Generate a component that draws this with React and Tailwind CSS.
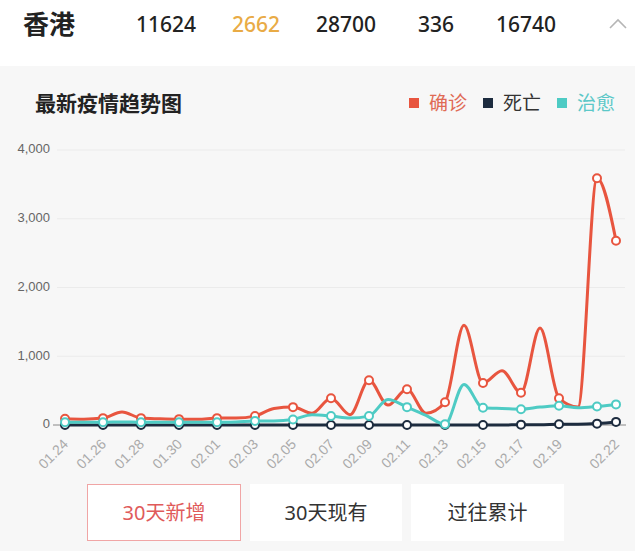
import React from "react";

const stats = [
  { value: "11624", color: "text-[#222]" },
  { value: "2662", color: "text-[#e9ab45]" },
  { value: "28700", color: "text-[#222]" },
  { value: "336", color: "text-[#222]" },
  { value: "16740", color: "text-[#222]" },
];

const dates = [
  "01.24", "01.25", "01.26", "01.27", "01.28", "01.29", "01.30", "01.31",
  "02.01", "02.02", "02.03", "02.04", "02.05", "02.06", "02.07", "02.08",
  "02.09", "02.10", "02.11", "02.12", "02.13", "02.14", "02.15", "02.16",
  "02.17", "02.18", "02.19", "02.20", "02.21", "02.22",
];

const confirmed = [
  90, 85, 100, 190, 100, 90, 85, 85, 100, 100, 130, 240, 260, 170, 390, 150,
  650, 290, 520, 170, 330, 1450, 610, 790, 470, 1410, 390, 260, 3590, 2680,
];
const dead = [
  0, 0, 0, 0, 0, 0, 0, 0, 0, 0, 0, 0, 0, 0, 0, 0,
  0, 0, 0, 0, 0, 0, 0, 0, 5, 5, 10, 10, 20, 45,
];
const cured = [
  40, 40, 40, 45, 40, 40, 40, 40, 40, 45, 60, 60, 80, 150, 130, 100,
  130, 370, 260, 140, 10, 590, 250, 240, 230, 260, 280, 250, 270, 300,
];

const series = [
  { data: confirmed, color: "#e8553f" },
  { data: dead, color: "#1d2c3f" },
  { data: cured, color: "#4ecbc4" },
];

// chart geometry
const X0 = 65;
const STEP = 19;
const Y0 = 295;
const K = 275 / 4000;

const px = (i) => X0 + i * STEP;
const py = (v) => Y0 - v * K;

// monotone cubic, like a smoothed echarts line
function smoothPath(vals) {
  const pts = vals.map((v, i) => [px(i), py(v)]);
  const n = pts.length;
  const h = STEP;
  const s = [];
  for (let i = 0; i < n - 1; i++) s[i] = (pts[i + 1][1] - pts[i][1]) / h;
  const m = new Array(n).fill(0);
  for (let i = 1; i < n - 1; i++) {
    if (s[i - 1] * s[i] <= 0) {
      m[i] = 0;
    } else {
      const p = (s[i - 1] + s[i]) / 2;
      m[i] =
        (Math.sign(s[i - 1]) + Math.sign(s[i])) *
        Math.min(Math.abs(s[i - 1]), Math.abs(s[i]), 0.5 * Math.abs(p));
    }
  }
  m[0] = (3 * s[0] - m[1]) / 2;
  m[n - 1] = (3 * s[n - 2] - m[n - 2]) / 2;
  let d = `M${pts[0][0]},${pts[0][1].toFixed(1)}`;
  for (let i = 0; i < n - 1; i++) {
    const [x0, y0] = pts[i];
    const [x1, y1] = pts[i + 1];
    d += ` C${(x0 + h / 3).toFixed(1)},${(y0 + (m[i] * h) / 3).toFixed(1)} ${(x1 - h / 3).toFixed(1)},${(y1 - (m[i + 1] * h) / 3).toFixed(1)} ${x1},${y1.toFixed(1)}`;
  }
  return d;
}

const markerIdx = [0, 2, 4, 6, 8, 10, 12, 14, 16, 18, 20, 22, 24, 26, 28, 29];
const labelIdx = [0, 2, 4, 6, 8, 10, 12, 14, 16, 18, 20, 22, 24, 26, 29];
const yTicks = [
  { v: 4000, label: "4,000" },
  { v: 3000, label: "3,000" },
  { v: 2000, label: "2,000" },
  { v: 1000, label: "1,000" },
  { v: 0, label: "0" },
];

const TrendChart = () => (
  <svg width="635" height="345" viewBox="0 0 635 345" className="block">
    {yTicks.map((t) => (
      <g key={t.v}>
        {t.v > 0 && (
          <line x1="57" x2="625" y1={py(t.v)} y2={py(t.v)} stroke="#ebebeb" strokeWidth="1" />
        )}
        <text
          x="50"
          y={py(t.v)}
          textAnchor="end"
          dominantBaseline="middle"
          fontSize="13"
          fill="#666"
          fontFamily="'Liberation Sans', Arial, sans-serif"
        >
          {t.label}
        </text>
      </g>
    ))}
    <line x1="53" x2="626" y1={Y0} y2={Y0} stroke="#888" strokeWidth="1" />

    {series.map((s, si) => (
      <g key={si}>
        <path d={smoothPath(s.data)} fill="none" stroke={s.color} strokeWidth="3" strokeLinejoin="round" />
        {markerIdx.map((i) => (
          <circle key={i} cx={px(i)} cy={py(s.data[i])} r="4" fill="#fff" stroke={s.color} strokeWidth="2" />
        ))}
      </g>
    ))}

    {labelIdx.map((i) => (
      <text
        key={i}
        x={px(i) + 4}
        y="315"
        textAnchor="end"
        fontSize="14"
        fill="#aaa"
        fontFamily="'Liberation Sans', Arial, sans-serif"
        transform={`rotate(-45 ${px(i) + 4} 315)`}
      >
        {dates[i]}
      </text>
    ))}
  </svg>
);

const legend = [
  { name: "确诊", box: "bg-[#e8553f]", text: "text-[#e06a55]" },
  { name: "死亡", box: "bg-[#1d2c3f]", text: "text-[#333]" },
  { name: "治愈", box: "bg-[#4ecbc4]", text: "text-[#5cc8c8]" },
];

const App = () => {
  return (
    <div className="w-[635px] h-[551px] overflow-hidden bg-[#f7f7f7] font-['Noto_Sans','Noto_Sans_CJK_SC',sans-serif]">
      <div className="h-[66px] bg-white">
        <div className="h-[48px] flex items-center pl-[23px] pr-[7px]">
          <span className="w-[98px] text-[26px] leading-none font-bold text-[#222]">香港</span>
          <div className="flex">
            {stats.map((s) => (
              <span key={s.value} className={`w-[90px] text-center text-[21px] leading-none font-medium ${s.color}`}>
                {s.value}
              </span>
            ))}
          </div>
          <svg className="ml-auto" width="20" height="12" viewBox="0 0 20 12">
            <path d="M2 10 L10 2 L18 10" fill="none" stroke="#b5b5b5" strokeWidth="1.6" />
          </svg>
        </div>
      </div>

      <div className="flex items-center h-[24px] mt-[25px] pl-[35px] pr-[20px]">
        <h3 className="text-[21px] leading-none font-bold text-[#222]">最新疫情趋势图</h3>
        <div className="ml-auto flex items-center gap-[10px]">
          {legend.map((l, i) => (
            <div key={l.name} className={`flex items-center gap-[10px] ${i > 0 ? "ml-[6px]" : ""}`}>
              <span className={`w-[10px] h-[10px] ${l.box}`} />
              <span className={`text-[19px] leading-none ${l.text}`}>{l.name}</span>
            </div>
          ))}
        </div>
      </div>

      <div className="mt-[15px]">
        <TrendChart />
      </div>

      <div className="flex gap-[9px] mt-[9px] pl-[87px]">
        <button className="w-[154px] h-[57px] bg-white border border-[#f0a5a5] text-[20px] text-[#e05a5a]">
          30天新增
        </button>
        <button className="w-[152px] h-[57px] bg-white text-[20px] text-[#333]">30天现有</button>
        <button className="w-[153px] h-[57px] bg-white text-[20px] text-[#333]">过往累计</button>
      </div>
    </div>
  );
};

export default App;
